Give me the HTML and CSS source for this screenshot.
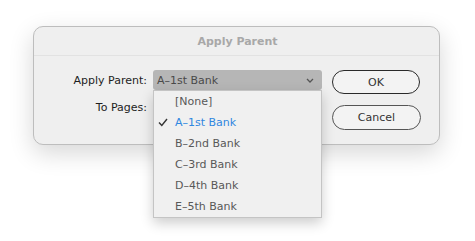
FILE: index.html
```html
<!DOCTYPE html>
<html>
<head>
<meta charset="utf-8">
<link rel="stylesheet" href="styles.css">
</head>
<body>
<div class="dialog">
  <div class="titlebar">Apply Parent</div>
  <div class="content">
    <div class="form">
      <div class="label">Apply Parent:</div>
      <div class="select">
        <span class="select-text">A–1st Bank</span>
        <svg class="chevron" width="8" height="5" viewBox="0 0 8 5"><path d="M1 1 L4 4 L7 1" fill="none" stroke="#555" stroke-width="1.3"/></svg>
        <div class="menu">
          <div class="item">[None]</div>
          <div class="item selected"><svg class="check" width="10" height="9" viewBox="0 0 10 9"><path d="M1 4.5 L3.8 7.5 L9 1" fill="none" stroke="#333" stroke-width="1.4"/></svg>A–1st Bank</div>
          <div class="item">B–2nd Bank</div>
          <div class="item">C–3rd Bank</div>
          <div class="item">D–4th Bank</div>
          <div class="item">E–5th Bank</div>
        </div>
      </div>
      <div class="label">To Pages:</div>
      <div class="field"></div>
    </div>
    <div class="buttons">
      <div class="btn default">OK</div>
      <div class="btn">Cancel</div>
    </div>
  </div>
</div>
</body>
</html>
```
FILE: styles.css
```css
html, body {
  margin: 0;
  padding: 0;
  background: #ffffff;
}
html {
  height: 100%;
}
body {
  box-sizing: border-box;
  min-height: 100%;
  padding: 26px 0 0 33px;
  font-family: "DejaVu Sans", sans-serif;
  font-size: 11px;
}
.dialog {
  width: 405px;
  height: 117px;
  border: 1px solid #bdbdbd;
  border-radius: 10px;
  background: #efefef;
  box-shadow: 0 8px 24px rgba(0,0,0,0.16);
}
.titlebar {
  height: 28px;
  border-bottom: 1px solid #e2e2e2;
  display: flex;
  align-items: center;
  justify-content: center;
  font-weight: bold;
  color: #a8a8a8;
  font-size: 11px;
  padding-left: 2px;
}
.content {
  display: flex;
  padding-top: 14px;
  gap: 10px;
}
.form {
  display: grid;
  grid-template-columns: 113px 169px;
  grid-template-rows: 20px 20px;
  column-gap: 6px;
  row-gap: 7px;
  align-items: center;
}
.label {
  text-align: right;
  color: #1e1e1e;
}
.select {
  position: relative;
  height: 20px;
  background: #b6b6b6;
  border-radius: 3px;
  display: flex;
  align-items: center;
  justify-content: space-between;
  padding: 0 8px 0 4px;
  color: #4a4a4a;
}
.chevron {
  margin-top: 1px;
}
.menu {
  position: absolute;
  top: 20px;
  left: 0;
  width: 167px;
  background: #f0f0f0;
  border: 1px solid #c4c4c4;
  box-shadow: 0 5px 12px rgba(0,0,0,0.2);
  z-index: 2;
}
.item {
  height: 21px;
  display: flex;
  align-items: center;
  padding-left: 21px;
  color: #585858;
  position: relative;
}
.item.selected {
  color: #2f87e0;
}
.check {
  position: absolute;
  left: 4px;
  top: 6px;
}
.field {
  height: 20px;
}
.buttons {
  display: flex;
  flex-direction: column;
  gap: 11px;
}
.btn {
  width: 87px;
  height: 23px;
  border: 1px solid #555;
  border-radius: 13px;
  display: flex;
  align-items: center;
  justify-content: center;
  color: #333;
  background: #f3f3f3;
}
.btn.default {
  border: 1.5px solid #2a2a2a;
  width: 86px;
  height: 22px;
}
```
